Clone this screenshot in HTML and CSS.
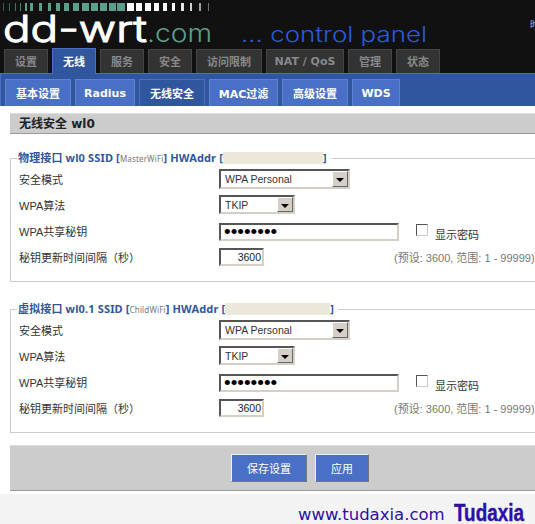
FILE: index.html
```html
<!DOCTYPE html>
<html lang="zh-CN">
<head>
  <meta charset="UTF-8" />
  <meta name="viewport" content="width=device-width, initial-scale=1.0"/>
  <title>无线安全</title>
  <link rel="stylesheet" href="styles.css">
</head>
<body>

  <!-- Header with logo -->
  <header class="header">
    <svg class="logo" width="535" height="49" viewBox="0 0 535 49">
      <g fill="#5a9f8c">
        <rect x="3" y="3" width="1" height="8" opacity="0.5"/><rect x="9" y="3" width="1" height="8" opacity="0.6"/>
        <rect x="15" y="3" width="1" height="8" opacity="0.7"/><rect x="20" y="3" width="1" height="8" opacity="0.8"/>
        <rect x="25" y="3" width="2" height="8"/><rect x="30" y="3" width="3" height="8"/>
        <rect x="39" y="3" width="3" height="8"/><rect x="48" y="3" width="3" height="8"/>
        <rect x="56" y="3" width="4" height="8"/><rect x="64" y="3" width="5" height="8"/>
        <rect x="73" y="3" width="6" height="8"/><rect x="82" y="3" width="7" height="8"/>
        <rect x="91" y="3" width="7" height="8"/><rect x="100" y="3" width="7" height="8"/>
        <rect x="109" y="3" width="7" height="8"/><rect x="117" y="3" width="8" height="8"/>
      </g>
      <g fill="#fff">
        <rect x="127" y="3" width="7" height="8"/><rect x="136" y="3" width="6" height="8"/>
        <rect x="145" y="3" width="6" height="8"/><rect x="154" y="3" width="5" height="8"/>
        <rect x="163" y="3" width="4" height="8"/><rect x="172" y="3" width="3" height="8"/>
        <rect x="181" y="3" width="3" height="8" opacity="0.9"/><rect x="190" y="3" width="2" height="8" opacity="0.8"/>
        <rect x="199" y="3" width="2" height="8" opacity="0.6"/><rect x="208" y="3" width="1" height="8" opacity="0.4"/>
      </g>
      <text class="logo-main" x="3" y="42" textLength="144" lengthAdjust="spacingAndGlyphs">dd-wrt</text>
      <text class="logo-com" x="147" y="42" textLength="65" lengthAdjust="spacingAndGlyphs">.com</text>
      <text class="logo-panel" x="241" y="42" textLength="186" lengthAdjust="spacingAndGlyphs">... control panel</text>
    </svg>
    <span class="time">时</span>
  </header>

  <!-- Main menu -->
  <nav class="tabs">
    <a class="tab">设置</a>
    <a class="tab active">无线</a>
    <a class="tab">服务</a>
    <a class="tab">安全</a>
    <a class="tab tab-wide">访问限制</a>
    <a class="tab tab-nat">NAT / QoS</a>
    <a class="tab">管理</a>
    <a class="tab">状态</a>
  </nav>

  <nav class="subtabs">
    <a class="subtab sub-cn">基本设置</a>
    <a class="subtab sub-radius">Radius</a>
    <a class="subtab sub-cn active">无线安全</a>
    <a class="subtab sub-mac">MAC过滤</a>
    <a class="subtab sub-cn">高级设置</a>
    <a class="subtab sub-wds">WDS</a>
  </nav>

  <main class="content">
    <h2 class="title">无线安全 wl0</h2>

    <!-- Physical interface -->
    <fieldset class="group">
      <legend>物理接口 wl0 SSID [<span class="ssid">MasterWiFi</span>] HWAddr [<span class="mac"></span>]</legend>
      <div class="row row-mode">
        <label>安全模式</label>
        <div class="select select-mode"><span class="select-text">WPA Personal</span><span class="arrow"></span></div>
      </div>
      <div class="row row-algo">
        <label>WPA算法</label>
        <div class="select select-algo"><span class="select-text">TKIP</span><span class="arrow"></span></div>
      </div>
      <div class="row row-key">
        <label>WPA共享秘钥</label>
        <input class="field field-key" type="password" value="12345678">
        <span class="check"></span>
        <span class="check-label">显示密码</span>
      </div>
      <div class="row">
        <label>秘钥更新时间间隔（秒）</label>
        <input class="field field-num" type="text" value="3600">
        <span class="hint">(预设: 3600, 范围: 1 - 99999)</span>
      </div>
    </fieldset>

    <!-- Virtual interface -->
    <fieldset class="group">
      <legend>虚拟接口 wl0.1 SSID [<span class="ssid">ChildWiFi</span>] HWAddr [<span class="mac mac-2"></span>]</legend>
      <div class="row row-mode">
        <label>安全模式</label>
        <div class="select select-mode"><span class="select-text">WPA Personal</span><span class="arrow"></span></div>
      </div>
      <div class="row row-algo">
        <label>WPA算法</label>
        <div class="select select-algo"><span class="select-text">TKIP</span><span class="arrow"></span></div>
      </div>
      <div class="row row-key">
        <label>WPA共享秘钥</label>
        <input class="field field-key" type="password" value="12345678">
        <span class="check"></span>
        <span class="check-label">显示密码</span>
      </div>
      <div class="row">
        <label>秘钥更新时间间隔（秒）</label>
        <input class="field field-num" type="text" value="3600">
        <span class="hint">(预设: 3600, 范围: 1 - 99999)</span>
      </div>
    </fieldset>

    <div class="actions">
      <button class="btn btn-save" type="button">保存设置</button>
      <button class="btn btn-apply" type="button">应用</button>
    </div>
  </main>

  <footer class="footer">
    <span class="site">www.tudaxia.com</span>
    <span class="brand">Tudaxia</span>
  </footer>

</body>
</html>
```

FILE: styles.css
```css
* {
  box-sizing: border-box;
}

html, body {
  height: 524px;
  overflow: hidden;
}

body {
  margin: 0;
  background-color: #fff;
  color: #333;
  font-family: "DejaVu Sans", "Noto Sans CJK SC", sans-serif;
  font-size: 11px;
}

.header {
  position: relative;
  height: 49px;
  background-color: #111;
}

.logo {
  display: block;
}

.logo-main {
  font-family: Inter, sans-serif;
  font-size: 37px;
  font-weight: 300;
  fill: #fff;
  stroke: #fff;
  stroke-width: 1.1px;
}

.logo-com {
  font-family: Inter, sans-serif;
  font-size: 25px;
  font-weight: 300;
  fill: #5a9f8c;
}

.logo-panel {
  font-family: Inter, sans-serif;
  font-size: 21px;
  font-weight: 300;
  fill: #2a5bd8;
}

.time {
  position: absolute;
  top: 18px;
  right: 0;
  width: 5px;
  overflow: hidden;
  color: #9cc;
  font-size: 9px;
}

.tabs {
  display: flex;
  gap: 4px;
  height: 24px;
  padding-left: 4px;
  background-color: #111;
}

.tab {
  display: flex;
  align-items: center;
  justify-content: center;
  width: 44px;
  padding-bottom: 1px;
  background-color: #333;
  border: 1px solid #444;
  border-bottom: none;
  color: #888;
  font-size: 11px;
  font-weight: bold;
}

.tab-wide {
  width: 66px;
}

.tab-nat {
  width: 78px;
}

.tab.active {
  height: 26px;
  margin-top: -1px;
  background-color: #30569e;
  border-color: #4a6fc6;
  color: #fff;
  position: relative;
}

.subtabs {
  display: flex;
  gap: 4px;
  height: 33px;
  padding: 5px 0 0 5px;
  background-color: #30569e;
  border-top: 1px solid #4a6fc6;
  border-left: 1px solid #4a6fc6;
}

.subtab {
  display: flex;
  align-items: center;
  justify-content: center;
  height: 27px;
  background-color: #4a6fc6;
  border: 1px solid #5f82d0;
  border-bottom: none;
  color: #fff;
  font-size: 11px;
  font-weight: bold;
}

.sub-cn {
  width: 66px;
}

.sub-radius {
  width: 60px;
}

.sub-mac {
  width: 69px;
}

.sub-wds {
  width: 48px;
}

.subtab.active {
  background-color: #30569e;
  border-color: #4a6fc6;
}

.subtabs .subtab:first-child {
  margin-left: -1px;
}

.content {
  padding: 7px 0 0 10px;
}

.title {
  height: 21px;
  margin: 0 0 18px;
  padding-left: 9px;
  background-color: #ccc;
  border-top: 1px solid #ddd;
  border-bottom: 1px solid #999;
  color: #222;
  font-size: 12px;
  line-height: 20px;
}

.group {
  height: 130px;
  margin: 0 -20px 21px 0;
  padding: 5px 0 0 8px;
  border: 1px solid #ccc;
}

.group legend {
  height: 12px;
  margin-left: -2px;
  padding: 0 4px 0 1px;
  color: #30569e;
  font-family: "Noto Sans", "Noto Sans CJK SC", sans-serif;
  font-size: 11px;
  font-weight: bold;
  letter-spacing: 0.15px;
  line-height: 12px;
  white-space: nowrap;
}

.ssid {
  color: #777;
  font-size: 8px;
  font-weight: normal;
}

.mac {
  display: inline-block;
  width: 100px;
  height: 12px;
  background-color: #ebe8da;
  vertical-align: top;
}

.mac-2 {
  width: 105px;
}

.row {
  display: flex;
  align-items: center;
  height: 18px;
  color: #333;
  font-family: "Liberation Sans", "Noto Sans CJK SC", sans-serif;
  font-size: 11px;
}

.row label {
  flex: none;
  width: 200px;
}

.row-mode {
  height: 20px;
  margin-bottom: 6px;
}

.row-algo {
  height: 19px;
  margin-bottom: 9px;
}

.row-key {
  margin-bottom: 7px;
}

.row-key label {
  margin-top: -3px;
}

.select {
  position: relative;
  height: 100%;
  padding-left: 4px;
  background-color: #fff;
  border: 2px solid;
  border-color: #555 #d4d0c8 #d4d0c8 #555;
  color: #333;
  font-size: 10.5px;
  line-height: 16px;
}

.select-mode {
  width: 131px;
}

.select-algo {
  width: 76px;
}

.arrow {
  position: absolute;
  top: 0;
  right: 0;
  bottom: 0;
  width: 16px;
  background-color: #d4d0c8;
  border: 1px solid;
  border-color: #fff #666 #666 #fff;
}

.arrow::after {
  content: "";
  position: absolute;
  top: 6px;
  left: 3px;
  border: 4px solid transparent;
  border-top: 4px solid #000;
  border-bottom: none;
}

.field {
  margin: 0;
  padding: 0 1px 0 3px;
  height: 18px;
  background-color: #fff;
  border: 2px solid;
  border-color: #555 #d4d0c8 #d4d0c8 #555;
  border-radius: 0;
  outline: none;
  color: #222;
  font-family: "Liberation Sans", sans-serif;
  font-size: 10.5px;
}

.field-key {
  width: 180px;
  color: #000;
  font-size: 19px;
}

.field-num {
  width: 45px;
  text-align: right;
}

.check {
  width: 12px;
  height: 12px;
  margin: -5px 0 0 17px;
  background-color: #fff;
  border: 1px solid;
  border-color: #555 #ccc #ccc #555;
}

.check-label {
  margin: 3px 0 0 7px;
  color: #333;
}

.hint {
  margin-left: 130px;
  color: #777;
  white-space: nowrap;
}

.actions {
  display: flex;
  gap: 8px;
  height: 46px;
  margin-top: -9px;
  padding: 8px 0 0 221px;
  background-color: #ccc;
  border-top: 1px solid #ddd;
  border-bottom: 1px solid #999;
}

.btn {
  height: 28px;
  padding: 0;
  background-color: #4a6fc6;
  border: 1px solid;
  border-color: #eee #777 #777 #eee;
  color: #fff;
  font-family: inherit;
  font-size: 11px;
}

.btn-save {
  width: 76px;
}

.btn-apply {
  width: 54px;
}

.footer {
  display: flex;
  align-items: flex-end;
  gap: 9px;
  height: 30px;
  margin-top: 3px;
  padding: 0 0 1px 298px;
  background-color: #f3f3f3;
  color: #2a10a8;
}

.site {
  flex: none;
  width: 147px;
  font-family: "DejaVu Sans", sans-serif;
  font-size: 16.5px;
  line-height: 16px;
  white-space: nowrap;
}

.brand {
  flex: none;
  font-family: "Liberation Sans", sans-serif;
  font-size: 23px;
  font-weight: bold;
  line-height: 20px;
  transform: scaleX(0.82);
  transform-origin: left;
  -webkit-text-stroke: 0.4px #2a10a8;
}
```
